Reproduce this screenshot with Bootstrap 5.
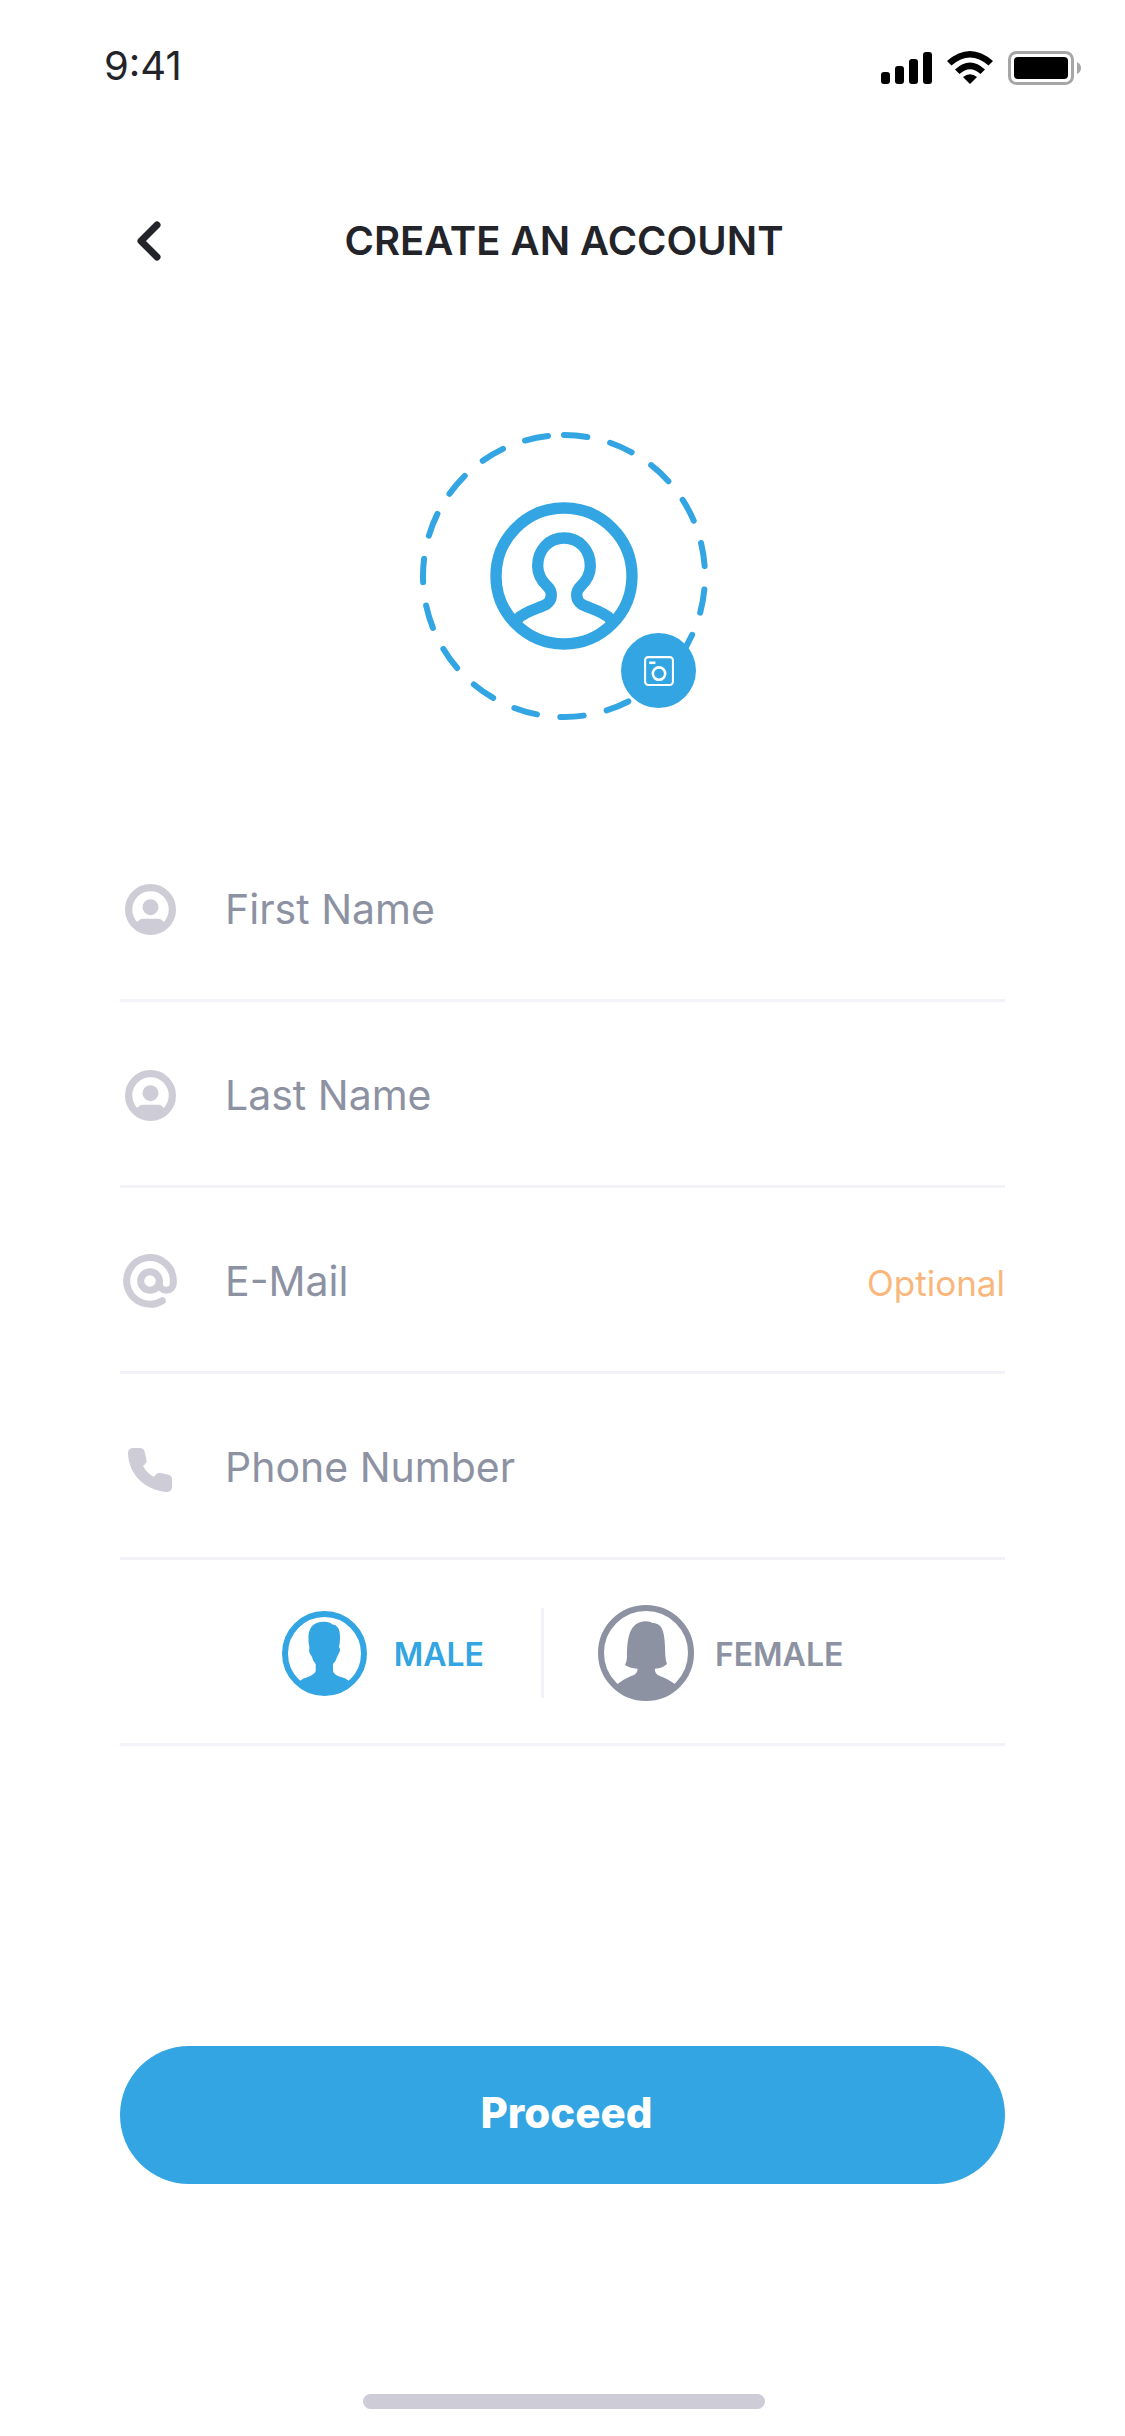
<!DOCTYPE html>
<html lang="en">
<head>
<meta charset="utf-8">
<meta name="viewport" content="width=device-width, initial-scale=1">
<title>Create an account</title>
<link rel="stylesheet" href="https://cdn.jsdelivr.net/npm/bootstrap@5.3.0/dist/css/bootstrap.min.css">
<style>
:root { --brand: #32a5e2; --ink: #23242a; --muted: #8d92a3; --soft: #cdccd7; --rule: #f2f2f8; --hint: #f9b77c; }
body { font-family: Inter, Roboto, "Liberation Sans", sans-serif; color: var(--ink); background: #fff; }
svg { display: block; flex: none; }
.status-bar { height: 132px; padding: 0 44px 0 104px; }
.clock { font-size: 40px; line-height: 48px; }
.screen { padding: 0 120px; }
.centred { padding-left: 3px; }
.title-bar { display: grid; grid-template-columns: 60px 1fr 60px; align-items: center; height: 217px; margin-bottom: 83px; }
.title-text { font-size: 40px; line-height: 48px; font-weight: 600; }
.back-btn { color: var(--ink); padding: 0 0 0 17px; border: 0; }
.avatar { width: 288px; height: 288px; margin-bottom: 96px; color: var(--brand); }
.camera-btn { right: 12px; bottom: 12px; width: 75px; height: 75px; color: #fff; background: var(--brand); }
.field { height: 186px; border-bottom: 3px solid var(--rule); padding-top: 3px; }
.field-icon { flex: none; width: 60px; color: var(--soft); }
.field-icon svg { margin: 0 auto; }
.field .form-control { font-size: 41px; line-height: 60px; color: var(--ink); padding: 0 0 0 45px; border: 0; border-radius: 0; background: none; box-shadow: none; }
.field .form-control::placeholder { color: var(--muted); opacity: 1; }
.optional { font-size: 35px; line-height: 48px; color: var(--hint); padding-top: 3px; }
.gender { font-size: 32px; line-height: 48px; font-weight: 600; color: var(--muted); cursor: pointer; gap: 21px; }
.gender-wide { gap: 27px; }
.gender span { padding-top: 3px; }
.btn-check:checked + .gender { color: var(--brand); }
.gender-rule { width: 3px; height: 90px; background: var(--rule); margin: 0 54px 0 57px; }
.proceed { height: 138px; margin-top: 300px; font-size: 42px; line-height: 48px; font-weight: 800; color: #fff; background: var(--brand); padding: 0 0 5px 8px; }
.proceed:hover, .camera-btn:hover { background: #2496d3; color: #fff; }
.home-bar { width: 402px; height: 15px; background: var(--soft); margin: 210px auto 27px; }
</style>
</head>
<body>
<header class="status-bar d-flex justify-content-between align-items-center">
  <div class="clock">9:41</div>
  <svg width="200" height="34" viewBox="0 0 200 34" role="img" aria-label="Signal, Wi-Fi and battery" class="mt-1">
    <g fill="#000">
      <rect x="0" y="21" width="9" height="12" rx="3"/><rect x="14" y="15" width="9" height="18" rx="3"/><rect x="28" y="8" width="9" height="25" rx="3"/><rect x="42" y="1" width="9" height="32" rx="3"/>
      <path d="M66 10Q89-10 112 10L107.500 14.500Q89-1.500 70.500 14.500ZM74 18.500Q89 4.500 104 18.500L99.500 23Q89 13.500 78.500 23ZM82 26Q89 20.500 96 26L89 33Z"/>
      <rect x="133" y="6" width="54" height="22" rx="4"/>
    </g>
    <rect x="128.500" y="1.500" width="63" height="31" rx="7" fill="none" stroke="#a6a6a6" stroke-width="3"/>
    <path d="M196 11Q200 13 200 17T196 23Z" fill="#a6a6a6"/>
  </svg>
</header>

<main class="screen">
  <div class="title-bar">
    <button type="button" class="btn back-btn" aria-label="Back">
      <svg width="24" height="40" viewBox="0 0 24 40" fill="none" stroke="currentColor" stroke-width="7" stroke-linecap="round" stroke-linejoin="round"><path d="M20 4 4 20l16 16"/></svg>
    </button>
    <h1 class="title-text centred text-center mb-0">CREATE AN ACCOUNT</h1>
  </div>

  <div class="centred d-flex justify-content-center">
    <div class="avatar position-relative">
      <svg width="288" height="288" viewBox="30 36 864 864" fill="none" stroke="currentColor" role="img" aria-label="Profile picture">
        <circle cx="462" cy="468" r="423" stroke-width="18" stroke-linecap="round" stroke-dasharray="70.500 70.500" transform="rotate(-90 462 468)"/>
        <circle cx="462" cy="468" r="204" stroke-width="34"/>
        <path stroke-width="34" d="M322 597C352 570 392 564 410 552C428 540 428 514 413 500C394 482 383 462 383 438C383 390 416 354 462 354S541 390 541 438C541 462 530 482 511 500C496 514 496 540 514 552C532 564 572 570 602 597"/>
      </svg>
      <button type="button" class="camera-btn btn rounded-circle border-0 p-0 position-absolute d-flex align-items-center justify-content-center" aria-label="Add a photo">
        <svg width="33" height="33" viewBox="-1 -1 32 32" fill="none" stroke="currentColor" stroke-width="2"><rect x="2" y="2" width="27" height="27" rx="3"/><circle cx="15.500" cy="18" r="6" stroke-width="2.500"/><path d="M6 7.500h6" stroke-width="2.500"/></svg>
      </button>
    </div>
  </div>

  <form>
    <div class="field d-flex align-items-center">
      <label class="field-icon" for="first">
        <svg role="img" aria-label="First Name" width="51" height="51" viewBox="0 0 154 154" fill="currentColor"><circle cx="77" cy="77" r="66" fill="none" stroke="currentColor" stroke-width="22"/><circle cx="77" cy="70" r="24"/><path d="M34 120Q42 105 54 105H100Q112 105 120 120A60 60 0 0 1 34 120Z"/></svg>
      </label>
      <input class="form-control" id="first" type="text" placeholder="First Name">
    </div>
    <div class="field d-flex align-items-center">
      <label class="field-icon" for="last">
        <svg role="img" aria-label="Last Name" width="51" height="51" viewBox="0 0 154 154" fill="currentColor"><circle cx="77" cy="77" r="66" fill="none" stroke="currentColor" stroke-width="22"/><circle cx="77" cy="70" r="24"/><path d="M34 120Q42 105 54 105H100Q112 105 120 120A60 60 0 0 1 34 120Z"/></svg>
      </label>
      <input class="form-control" id="last" type="text" placeholder="Last Name">
    </div>
    <div class="field d-flex align-items-center">
      <label class="field-icon" for="email">
        <svg role="img" aria-label="E-Mail" width="54" height="54" viewBox="0 0 162 162" fill="none" stroke="currentColor" stroke-width="21" stroke-linecap="round"><circle cx="81" cy="81" r="28"/><path d="M118 140A70 70 0 1 1 151 81V88A20 20 0 0 1 109 88V81"/></svg>
      </label>
      <input class="form-control" id="email" type="email" placeholder="E-Mail" aria-describedby="email-note">
      <span class="optional" id="email-note">Optional</span>
    </div>
    <div class="field d-flex align-items-center">
      <label class="field-icon" for="phone">
        <svg role="img" aria-label="Phone Number" width="44" height="50" viewBox="0 -18 132 150" fill="currentColor"><path d="M14 0H36Q47 0 50 11L56 38Q57 44 45 54Q56 75 77 86L86 78Q90 74 97 75L122 80Q132 83 132 94V117Q131 132 115 132C50 126 2 80 0 16Q0 1 14 0Z"/></svg>
      </label>
      <input class="form-control" id="phone" type="tel" placeholder="Phone Number">
    </div>
    <div class="field d-flex align-items-center justify-content-center" role="radiogroup" aria-label="Gender">
      <input class="btn-check" type="radio" name="gender" id="male" checked>
      <label class="gender gender-wide d-flex align-items-center" for="male">
        <svg width="85" height="85" viewBox="0 0 85 85" fill="currentColor"><circle cx="42.500" cy="42.500" r="39.500" fill="none" stroke="currentColor" stroke-width="6"/><path d="M27.500 37Q26 31 26.500 24Q28 11 41.500 10.700Q48 10.500 50 13.300Q58 14 58 26Q58 32 57 36Q59 38 57 42L55.500 45Q54 50 51 53V60Q52 64 59 66Q64 67 67 70Q56 82 42.500 82Q29 82 18 70Q21 67 26 66Q33 63 33.700 60V53Q31 50 29.500 45Q26 41 27.500 37Z"/></svg>
        <span>MALE</span>
      </label>
      <div class="gender-rule"></div>
      <input class="btn-check" type="radio" name="gender" id="female">
      <label class="gender d-flex align-items-center" for="female">
        <svg width="96" height="96" viewBox="0 0 96 96" fill="currentColor"><circle cx="48" cy="48" r="45" fill="none" stroke="currentColor" stroke-width="6"/><path d="M29 52C29 34 31 17 47.500 16.300Q53 16.500 54 18C65 18 67 27 67.300 50Q67.500 55 69 59Q65 63 57 63.700V66Q58 70 63 71.500Q72 75 78 80Q66 93 48 93Q30 93 18 80Q24 75 32 71.500Q38 70 39.400 66V63.700Q31 63 27 60Q29 56 29 52Z"/></svg>
        <span>FEMALE</span>
      </label>
    </div>
    <button type="submit" class="proceed btn border-0 rounded-pill w-100">Proceed</button>
  </form>
  <div class="centred"><div class="home-bar rounded-pill"></div></div>
</main>
<script src="https://cdn.jsdelivr.net/npm/bootstrap@5.3.0/dist/js/bootstrap.bundle.min.js"></script>
</body>
</html>
